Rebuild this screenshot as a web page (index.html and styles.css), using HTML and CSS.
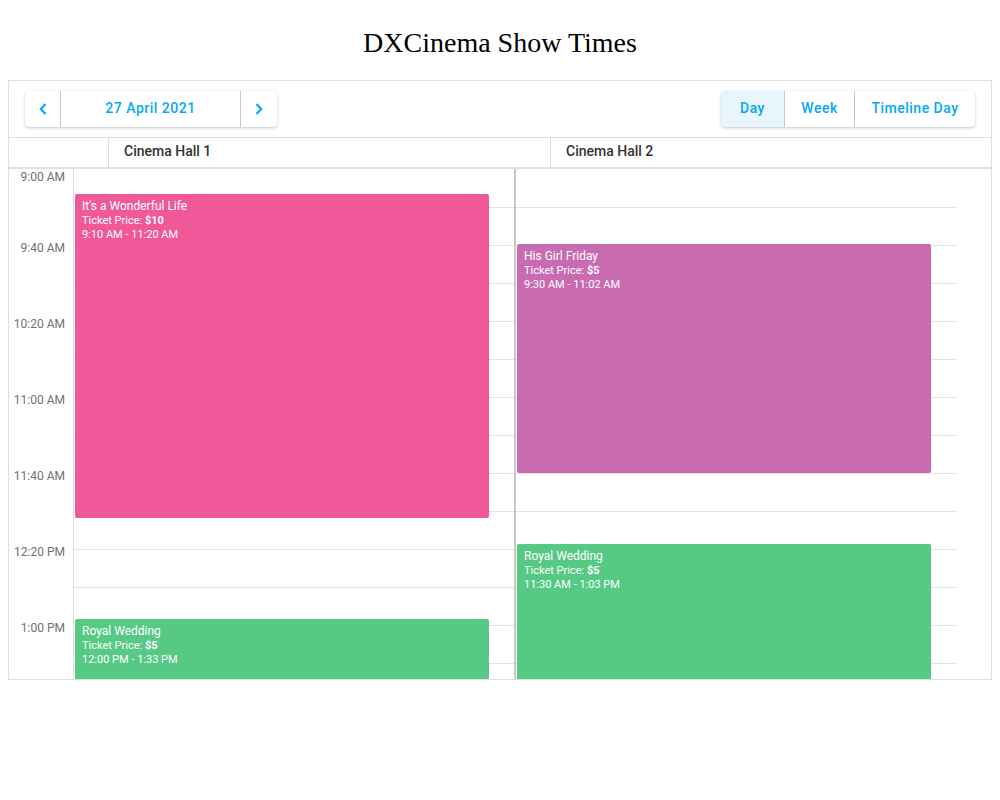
FILE: index.html
```html
<!DOCTYPE html>
<html>
<head>
<meta charset="utf-8">
<title>DXCinema Show Times</title>
<link rel="stylesheet" href="styles.css">
</head>
<body>
<h1 class="title">DXCinema Show Times</h1>
<div class="scheduler">
  <div class="toolbar">
    <div class="btn-group">
      <button class="btn btn-icon btn-prev" aria-label="Previous">
        <svg width="10" height="14" viewBox="0 0 10 14"><path d="M7.5 2 L2.8 7 L7.5 12" fill="none" stroke="#03a9f4" stroke-width="2.2"/></svg>
      </button>
      <button class="btn btn-date">27 April 2021</button>
      <button class="btn btn-icon btn-next" aria-label="Next">
        <svg width="10" height="14" viewBox="0 0 10 14"><path d="M2.5 2 L7.2 7 L2.5 12" fill="none" stroke="#03a9f4" stroke-width="2.2"/></svg>
      </button>
    </div>
    <div class="btn-group">
      <button class="btn btn-view active view-day">Day</button>
      <button class="btn btn-view view-week">Week</button>
      <button class="btn btn-view view-timeline">Timeline Day</button>
    </div>
  </div>
  <div class="header">
    <div class="header-corner"></div>
    <div class="header-cell hall1">Cinema Hall 1</div>
    <div class="header-cell hall2">Cinema Hall 2</div>
  </div>
  <div class="body">
    <div class="time-col">
      <div class="time-cell first">9:00 AM</div>
      <div class="time-cell">9:40 AM</div>
      <div class="time-cell">10:20 AM</div>
      <div class="time-cell">11:00 AM</div>
      <div class="time-cell">11:40 AM</div>
      <div class="time-cell">12:20 PM</div>
      <div class="time-cell">1:00 PM</div>
    </div>
    <div class="group group1">
      <div class="cell"></div><div class="cell"></div><div class="cell"></div><div class="cell"></div>
      <div class="cell"></div><div class="cell"></div><div class="cell"></div><div class="cell"></div>
      <div class="cell"></div><div class="cell"></div><div class="cell"></div><div class="cell"></div>
      <div class="cell"></div><div class="cell"></div>
      <div class="appt pink" style="top:25px;height:324px">
        <div class="appt-title">It's a Wonderful Life</div>
        <div class="appt-info">Ticket Price: <b>$10</b></div>
        <div class="appt-info">9:10 AM - 11:20 AM</div>
      </div>
      <div class="appt green" style="top:450px;height:232px">
        <div class="appt-title">Royal Wedding</div>
        <div class="appt-info">Ticket Price: <b>$5</b></div>
        <div class="appt-info">12:00 PM - 1:33 PM</div>
      </div>
    </div>
    <div class="group group2">
      <div class="cell"></div><div class="cell"></div><div class="cell"></div><div class="cell"></div>
      <div class="cell"></div><div class="cell"></div><div class="cell"></div><div class="cell"></div>
      <div class="cell"></div><div class="cell"></div><div class="cell"></div><div class="cell"></div>
      <div class="cell"></div><div class="cell"></div>
      <div class="appt purple" style="top:75px;height:229px">
        <div class="appt-title">His Girl Friday</div>
        <div class="appt-info">Ticket Price: <b>$5</b></div>
        <div class="appt-info">9:30 AM - 11:02 AM</div>
      </div>
      <div class="appt green" style="top:375px;height:232px">
        <div class="appt-title">Royal Wedding</div>
        <div class="appt-info">Ticket Price: <b>$5</b></div>
        <div class="appt-info">11:30 AM - 1:03 PM</div>
      </div>
    </div>
  </div>
</div>
</body>
</html>
```

FILE: styles.css
```css
* { box-sizing: border-box; }
body {
  margin: 0;
  padding: 0 8px;
  background: #fff;
}
.title {
  margin: 0;
  padding-top: 23px;
  height: 80px;
  font-family: "Liberation Serif", "Times New Roman", serif;
  font-weight: 400;
  font-size: 28px;
  line-height: 40px;
  text-align: center;
  color: #000;
}
.scheduler {
  height: 600px;
  border: 1px solid #dddddd;
  overflow: hidden;
  font-family: Roboto, "Liberation Sans", sans-serif;
}
.toolbar {
  height: 57px;
  border-bottom: 1px solid #dddddd;
  padding: 10px 16px 0;
  display: flex;
  justify-content: space-between;
  align-items: flex-start;
}
.btn-group {
  display: flex;
  height: 36px;
  border-radius: 4px;
  box-shadow: 0 1px 3px rgba(0,0,0,0.22), 0 0 1px rgba(0,0,0,0.08);
  background: #fff;
  overflow: hidden;
}
.btn {
  border: 0;
  margin: 0;
  padding: 0 0 2px;
  background: transparent;
  font-family: Roboto, "Liberation Sans", sans-serif;
  font-size: 14px;
  font-weight: 500;
  letter-spacing: 0.5px;
  color: #03a9f4;
  display: flex;
  align-items: center;
  justify-content: center;
  height: 36px;
}
.btn-icon { padding: 0; }
.btn + .btn { border-left: 1px solid #c8c8c8; }
.btn-prev { width: 35px; }
.btn-date { width: 180px; }
.btn-next { width: 37px; }
.view-day { width: 63px; }
.view-week { width: 70px; }
.view-timeline { width: 121px; }
.btn.active { background: #e9f5fd; }
.header {
  display: flex;
  height: 31px;
  border-bottom: 2px solid #e0e0e0;
}
.header-corner {
  width: 100px;
  border-right: 1px solid #dddddd;
}
.header-cell {
  width: 442px;
  padding-left: 15px;
  font-size: 14px;
  font-weight: 500;
  color: #333333;
  line-height: 27px;
}
.hall1 { border-right: 1px solid #dddddd; }
.hall2 { flex: 1; }
.body {
  display: flex;
  height: 520px;
}
.time-col {
  width: 65px;
  border-right: 1px solid #dddddd;
  padding-top: 1px;
  flex: none;
}
.time-cell {
  height: 76px;
  font-size: 12px;
  line-height: 14px;
  color: #707070;
  text-align: right;
  padding-right: 8px;
}
.time-cell.first { height: 71px; }
.group {
  position: relative;
  flex: none;
}
.group1 {
  width: 442px;
  border-right: 2px solid #c8c8c8;
}
.group2 {
  width: 441px;
}
.cell {
  height: 38px;
  border-bottom: 1px solid #e3e3e3;
}
.cell:first-child { height: 39px; }
.appt {
  position: absolute;
  left: 1px;
  width: 414px;
  border-radius: 2px;
  padding: 5px 7px;
  color: #fff;
}
.appt-title {
  font-size: 12px;
  line-height: 14.5px;
}
.appt-info {
  font-size: 11px;
  line-height: 14.5px;
}
.appt b { font-weight: 700; }
.pink { background: #f0589a; }
.purple { background: #c96bb0; }
.green { background: #56ca85; }
```
